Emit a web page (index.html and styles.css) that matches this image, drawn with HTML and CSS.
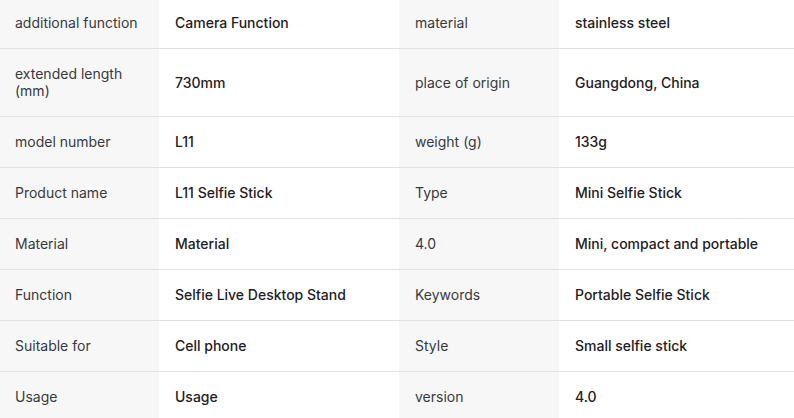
FILE: index.html
```html
<!DOCTYPE html>
<html>
<head>
<meta charset="utf-8">
<link rel="stylesheet" href="styles.css">
</head>
<body>
<table class="spec">
  <colgroup>
    <col class="c-label"><col class="c-value"><col class="c-label"><col class="c-value2">
  </colgroup>
  <tbody>
    <tr><td class="label">additional function</td><td class="value">Camera Function</td><td class="label">material</td><td class="value">stainless steel</td></tr>
    <tr><td class="label">extended length<br>(mm)</td><td class="value">730mm</td><td class="label">place of origin</td><td class="value">Guangdong, China</td></tr>
    <tr><td class="label">model number</td><td class="value">L11</td><td class="label">weight (g)</td><td class="value">133g</td></tr>
    <tr><td class="label">Product name</td><td class="value">L11 Selfie Stick</td><td class="label">Type</td><td class="value">Mini Selfie Stick</td></tr>
    <tr><td class="label">Material</td><td class="value">Material</td><td class="label">4.0</td><td class="value">Mini, compact and portable</td></tr>
    <tr><td class="label">Function</td><td class="value">Selfie Live Desktop Stand</td><td class="label">Keywords</td><td class="value">Portable Selfie Stick</td></tr>
    <tr><td class="label">Suitable for</td><td class="value">Cell phone</td><td class="label">Style</td><td class="value">Small selfie stick</td></tr>
    <tr><td class="label">Usage</td><td class="value">Usage</td><td class="label">version</td><td class="value">4.0</td></tr>
  </tbody>
</table>
</body>
</html>
```
FILE: styles.css
```css
html, body {
  margin: 0;
  padding: 0;
  background: #ffffff;
}
body {
  font-family: Inter, "Noto Sans", sans-serif;
  font-size: 14px;
  line-height: 17px;
}
.spec {
  width: 795px;
  margin: -2px 0 0 -1px;
  border-collapse: collapse;
  table-layout: fixed;
}
.c-label { width: 160px; }
.c-value { width: 240px; }
.c-value2 { width: 235px; }
.spec td {
  padding: 16px 15px 17px 16px;
  border-bottom: 1px solid #e1e1e1;
  vertical-align: middle;
  text-align: left;
}
.spec td.label {
  background: #f7f7f7;
  color: #373a40;
}
.spec td.value {
  background: #ffffff;
  color: #1f2024;
  font-weight: 500;
}
```
